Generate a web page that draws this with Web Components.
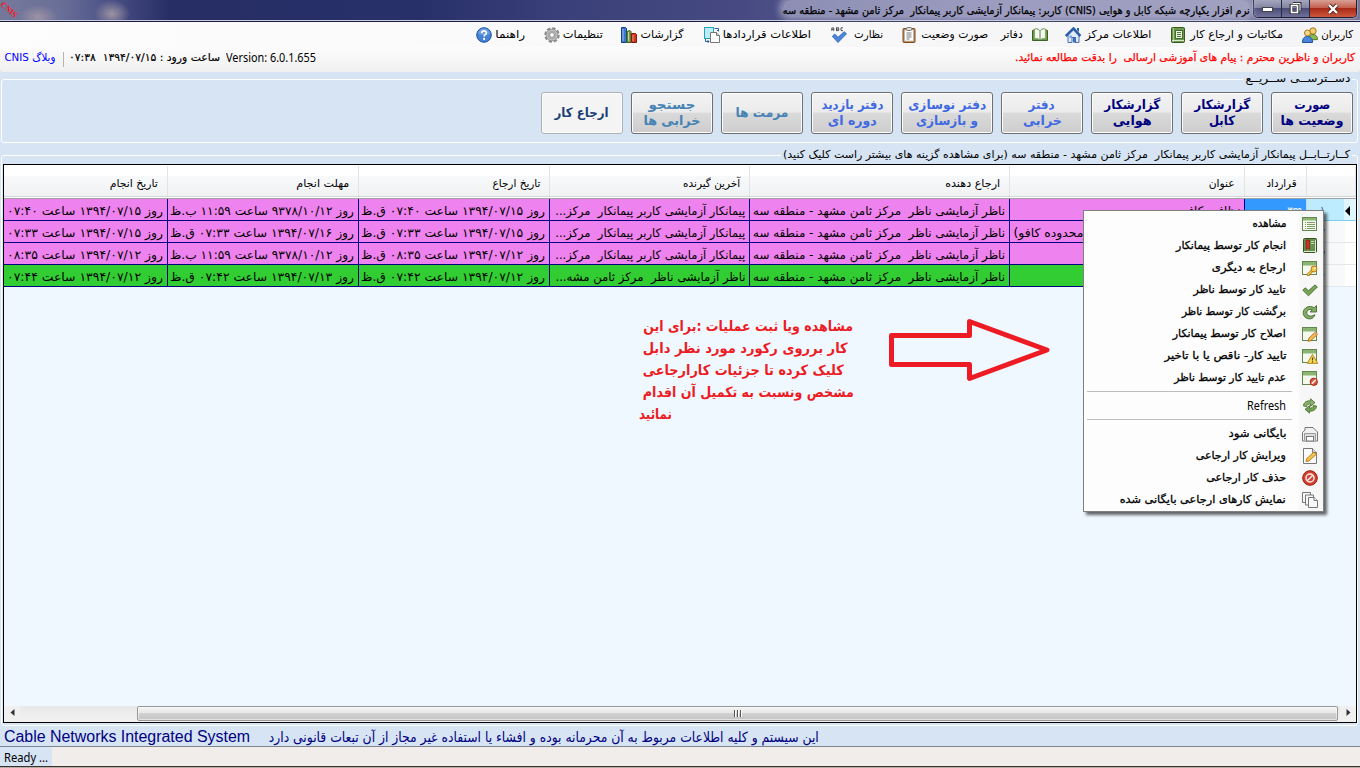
<!DOCTYPE html>
<html lang="fa">
<head>
<meta charset="utf-8">
<title>CNIS</title>
<style>
html,body{margin:0;height:768px;overflow:hidden}
body{font:11px/14px "DejaVu Sans","Noto Sans",sans-serif;color:#000}
</style>
</head>
<body>
<cnis-window></cnis-window>
<script>
function define(name, css, render, ready) {
  customElements.define(name, class extends HTMLElement {
    constructor() {
      super();
      this.attachShadow({mode: 'open'});
    }
    connectedCallback() {
      if (this.shadowRoot.firstChild) return;
      this.shadowRoot.innerHTML = '<style>' + css + '</style>' + render(this);
      if (ready) ready(this);
    }
  });
}
const fa = (text, w, extra = '') => `<fit-text w="${w}" ${extra}>${text}</fit-text>`;

/* ---------- icons, 16x16 ---------- */
const sheet = '<rect x=".5" y="1.5" width="14" height="13" fill="#f4f8ef" stroke="#64874f"/><rect x="1" y="2" width="13" height="3.5" fill="#8db572"/>';
const icons = {
  users: '<circle cx="11" cy="4" r="3.2" fill="#f3cf76" stroke="#a87416"/><path d="M6.5 13c0-4 2-5.500 4.500-5.500s4.500 1.500 4.500 5z" fill="#8eb956" stroke="#557c26"/><circle cx="5.500" cy="6" r="3" fill="#f6d88c" stroke="#a87416"/><path d="M.5 15.500c0-4.500 2-6 5-6s5 1.500 5 6z" fill="#4c86da" stroke="#1d4fa0"/>',
  book: '<rect x="1.500" y=".5" width="13" height="15" rx="1" fill="#6c9a4c" stroke="#38591f"/><path d="M3.500 1v14" stroke="#a5c98a"/><rect x="5.500" y="3.500" width="7" height="8" fill="#e9f3dd" stroke="#486b31"/><path d="M7 5.500h4M7 7.500h4M7 9.500h4" stroke="#50763a"/><path d="M2 13.500h12" stroke="#dce9cf"/>',
  home: '<path d="M3 7v8.500h4v-5h3v5h4V7L8.500 2z" fill="#dfe9f7" stroke="#4a73b0"/><path d="M.8 9 8.500 1.500 15.500 9" fill="none" stroke="#2e5ea9" stroke-width="2.600"/><path d="M12 1h2v4l-2-2z" fill="#2e5ea9"/><rect x="4.500" y="8.500" width="2.500" height="2.500" fill="#79a4df"/><rect x="8" y="10" width="3" height="5.500" fill="#3d6fb8"/>',
  open: '<path d="M.5 3.500 4 2c2 0 3 .5 4 2 1-1.500 2-2 4-2l3.500 1.500v10H.5z" fill="#6c9a4c" stroke="#3d6023"/><path d="M2.500 2c3-.5 4.500.5 5.500 2v9c-1-1-3-1.700-5.500-1.300zM13.500 2C10.500 1.500 9 2.500 8 4v9c1-1 3-1.700 5.500-1.300z" fill="#f4f7ee" stroke="#7b9b65" stroke-width=".8"/>',
  clip: '<rect x="2" y="1.500" width="12" height="14" rx="1" fill="#c58a50" stroke="#7c4a1d"/><rect x="3.500" y="3" width="9" height="11" fill="#fff" stroke="#aaa" stroke-width=".6"/><rect x="5.500" y=".5" width="5" height="3" rx="1" fill="#ddd" stroke="#777"/><path d="M5.500 6h5M5.500 8h5M5.500 10h5M5.500 12h3" stroke="#777"/>',
  check: '<path d="M.8 4.500V1.500h2v3M.8 3.100h2M5.500 1v3.500M5.500 1.400h2.200v2.800H5.500M5.500 2.800h2M12 1.400h-2v2.800h2" fill="none" stroke="#444" stroke-width=".9" transform="translate(0 -.6)"/><path d="m1.300 9.300 2.400-2.200L7 10.300l6.200-5.600 2.300 2.100L7 15.500z" fill="#4c86da" stroke="#285ba8" stroke-width=".8"/>',
  contracts: '<rect x=".5" y=".5" width="9" height="11" fill="#b9ecf5" stroke="#2aa0ba"/><path d="M6.500 5.500h6l3 3v7h-9z" fill="#fff" stroke="#777"/><path d="M12.500 5.500v3h3" fill="#ddd" stroke="#777"/><path d="M10.500 1.500h4V4M13 3l1.500 1.500M1.500 12v2.500H5M3.500 13l1.500 1.500L3.500 16" fill="none" stroke="#2c62ae"/>',
  chart: '<path d="M.5.5h4l1 1v14h-5z" fill="#3b76d1" stroke="#173f85"/><path d="M6 4.500 9 3.500l1 1v11H6z" fill="#75a445" stroke="#3d651b"/><path d="M10.500 6.500h4l1 1v8h-5z" fill="#d5361d" stroke="#84180a"/><path d="M2 2v12M7.500 5v9M12 8v6" stroke="#fff" stroke-opacity=".5"/>',
  gear: '<circle cx="8" cy="8" r="6.600" fill="none" stroke="#888" stroke-width="2.200" stroke-dasharray="3.300 1.884"/><circle cx="8" cy="8" r="5.900" fill="#c4c4c4" stroke="#888" stroke-width=".8"/><circle cx="8" cy="8" r="3.900" fill="none" stroke="#a4a4a4"/><circle cx="8" cy="8" r="2.400" fill="#fff" stroke="#777" stroke-width=".8"/>',
  help: '<circle cx="8" cy="8" r="7.300" fill="#4382d5" stroke="#1f53a3"/><path d="M2 6.500a6 5.200 0 0 1 12 0c-3 2-9 2-12 0z" fill="#fff" opacity=".22"/><path d="M5.700 6.200c0-3 4.700-3 4.700-.3 0 1.700-2.300 1.800-2.300 3.600" fill="none" stroke="#fff" stroke-width="1.700"/><circle cx="8.100" cy="11.900" r="1.100" fill="#fff"/>',
  list: '<rect x=".5" y="1.5" width="14" height="13" fill="#f4f8ef" stroke="#64874f"/><rect x="1" y="2" width="13" height="2.5" fill="#8db572"/><path d="M3 6.500h1M5 6.500h8M3 8.500h1M5 8.500h8M3 10.500h1M5 10.500h8M3 12.500h1M5 12.500h8" stroke="#7ca164"/>',
  redbook: '<rect x="1.500" y=".5" width="13" height="14" rx="1" fill="#67914a" stroke="#34511f"/><path d="M13.500 2v13.500M2 13.500h12" stroke="#dde9d2"/><path d="M4 2h3.500v9.500L5.800 10 4 11.500z" fill="#c8312a" stroke="#7c130f" stroke-width=".6"/><path d="M9 3.500h3M9 5.500h3" stroke="#c8ddb9"/>',
  key: sheet + '<g stroke="#a66c0c" stroke-width=".8" fill="#f4c448"><path d="m10 9.500-5 4.700.3 1.500h2.200v-1.200h1.400v-1.400l2.800-2z"/><circle cx="12" cy="9" r="3"/></g><circle cx="12.800" cy="8.300" r=".9" fill="#fff"/>',
  ok: '<path d="m.8 8.200 2.600-2.400 3 3L13 2.900 15.300 5 6.500 13.800z" fill="#78a657" stroke="#44682c" stroke-width=".9"/>',
  back: '<path d="M14.500 1.500v6.500H8L10.300 5.800C7 4.500 4.800 6.500 4.800 9s3.400 4.500 8.200 1.700C12 14 9 15.300 6.500 14.800 3 14.200 1 11.500 1.200 8.500 1.500 3.500 7.500.8 12.200 3.700z" fill="#82ad65" stroke="#47692f" stroke-width=".9"/>',
  edit: sheet + '<path d="m6 15.300.8-3L13.300 6l2.300 2.200L9 14.600z" fill="#f3ba46" stroke="#a7660c" stroke-width=".8"/><path d="m12 7.200 2.300 2.200 1.300-1.200L13.300 6z" fill="#e49a90"/>',
  warn: sheet + '<path d="M10.500 6.500 15.700 15.300H5.300z" fill="#f8dc62" stroke="#b5820d"/><path d="M10.500 9.500v3M10.500 13.300v1.200" stroke="#5b4100" stroke-width="1.200"/>',
  deny: sheet + '<circle cx="11.800" cy="11.800" r="3.600" fill="#e2553f" stroke="#a32312"/><path d="m9.800 13.800 4-4" stroke="#fff" stroke-width="1.400"/>',
  refresh: '<path d="M1.500 8C1.500 4.500 4.800 2.300 8.500 3V.8L13 4.700 8.500 8.300V6C6.500 5.700 5 6.500 4.700 8.500z" fill="#86b06a" stroke="#456b2c" stroke-width=".8"/><path d="M14.500 8c0 3.500-3.300 5.700-7 5v2.200L3 11.300l4.500-3.600V10c2 .3 3.500-.5 3.800-2.500z" fill="#73a055" stroke="#456b2c" stroke-width=".8"/>',
  disk: '<path d="M3 1.500h8l4.500 4.500v9H.5V6.500L3 4z" fill="#f1f1f1" stroke="#777"/><path d="M2.500 14.500V7.500h11v7" fill="#dcdcdc" stroke="#888" stroke-width=".8"/><rect x="4.500" y="10.500" width="7" height="4.500" fill="#fff" stroke="#777"/>',
  note: '<path d="M1.500.5h9l4 4v11h-13z" fill="#fafafa" stroke="#777"/><path d="M10.500.5v4h4" fill="#ddd" stroke="#777"/><path d="m4 13.500.8-3L12 4l2.400 2.300L7 13z" fill="#f5c14c" stroke="#a7700c" stroke-width=".8"/>',
  stop: '<circle cx="8" cy="8" r="7.300" fill="#d6402f" stroke="#941b0f"/><circle cx="8" cy="8" r="4" fill="none" stroke="#fff" stroke-width="1.500" opacity=".9"/><path d="m5.200 10.800 5.600-5.600" stroke="#fff" stroke-width="1.500" opacity=".9"/>',
  pages: '<g fill="#f8f8f8" stroke="#777"><path d="M.5.5h8v10h-8z"/><path d="M3.500 3h8v10h-8z"/><path d="M6.500 5.500h5.500l3.500 3v7h-9z"/><path d="M12 5.500v3h3.500"/></g>'
};
define('x-icon', ':host{display:block;width:16px;height:16px;flex:none}svg{display:block}',
  el => `<svg width="16" height="16" viewBox="0 0 16 16">${icons[el.getAttribute('name')]}</svg>`);

/* ---------- window frame ---------- */
define('title-bar', `
:host{display:flex;direction:rtl;height:20px;padding-right:3px;border-bottom:1px solid #c9cbe0;box-shadow:0 1px #1c1d3c;position:relative;z-index:1;
background:radial-gradient(ellipse 20px 12px at 38px 17px,#9d92a4,transparent),radial-gradient(ellipse 18px 14px at 112px 14px,#9c93a2,transparent),linear-gradient(90deg,#74799b 0,#6a6f98 60px,#4b5185 110px,#272e65 170px,#28306a 420px,#3a4079 560px,#474a82 740px,#6d6f9f 1000px,#7779a4 1230px,#7a7593 1360px)}
.b{display:flex;direction:ltr;height:17px;border:1px solid #1d1d35;border-top:0;border-radius:0 0 5px 5px;box-shadow:inset 0 0 0 1px #ffffff70,0 0 0 1px #ffffff40;overflow:hidden}
.b i{width:27px;display:flex;align-items:center;justify-content:center;border-right:1px solid #2b2b48;background:linear-gradient(#a5a6bd,#8284a3 45%,#4b4d78 50%,#6f719a)}
.b i:last-child{width:46px;border:0;background:linear-gradient(#d8a096,#c5604f 45%,#a92a17 50%,#cc573c)}
.t{margin-right:3px;padding-top:4px;border-radius:8px;background:#c4c4dc88;box-shadow:0 0 6px 4px #c4c4dc88;height:13px}
.logo{position:absolute;left:-1px;top:6px;width:19px;text-align:center;direction:ltr;font:bold 8px/8px "Liberation Serif",serif;color:#ff1010;transform:rotate(42deg)}
:host{clip-path:inset(0 0 -1px 0)}`,
() => `<div class="b"><i><svg width="12" height="8"><rect x=".5" y="2.500" width="10" height="4" fill="#fff" stroke="#444"/></svg></i><i><svg width="13" height="13"><path d="M4 1.500h7v7M2 3.500h7v7H2z" fill="none" stroke="#333" stroke-width="3"/><path d="M4 1.500h7v7" fill="none" stroke="#fff"/><rect x="2.500" y="3.500" width="6" height="7" fill="none" stroke="#fff" stroke-width="1.600"/></svg></i><i><svg width="14" height="12"><path d="m3 2 8 8M11 2l-8 8" stroke="#51231d" stroke-width="4"/><path d="m3 2 8 8M11 2l-8 8" stroke="#fff" stroke-width="2.400"/></svg></i></div>
<div class="t">${fa('نرم افزار یکپارچه شبکه کابل و هوایی (CNIS) کاربر: پیمانکار آزمایشی کاربر پیمانکار&nbsp; مرکز ثامن مشهد - منطقه سه', 467, 'stroke=".25"')}</div><div class="logo">CNIS</div>`);

define('menu-item', `:host{display:flex;direction:rtl;align-items:center;justify-content:space-between;height:24px;flex:none}:host([flip]){flex-direction:row-reverse}x-icon{margin-top:-1px}`,
  el => { el.style.width = el.getAttribute('w') + 'px'; el.style.marginRight = el.getAttribute('gap') + 'px';
    return fa(el.getAttribute('label'), el.getAttribute('tw')) + `<x-icon name="${el.getAttribute('icon')}"></x-icon>`; });
const menu = [
  ['کاربران','users',51,32,7],['مکاتبات و ارجاع کار','book',113,93,19],['اطلاعات مرکز','home',86,66,19],['دفاتر','open',47,22,17,1],
  ['صورت وضعیت','clip',87,67,13],['نظارت','check',52,29,18],['اطلاعات قراردادها','contracts',107,88,20],['گزارشات','chart',63,43,20],
  ['تنظیمات','gear',59,40,18],['راهنما','help',49,30,19]];
define('menu-bar', `:host{display:flex;direction:rtl;height:24px;padding-top:1px;background:linear-gradient(90deg,#fdfdfd,#f4f4f6)}`,
  () => menu.map(([l,i,w,tw,g,f]) => `<menu-item label="${l}" icon="${i}" w="${w}" tw="${tw}" gap="${g}" ${f?'flip':''}></menu-item>`).join(''));

define('info-strip', `:host{display:flex;align-items:center;height:25px;padding:0 5px 3px 4px;box-sizing:border-box;background:linear-gradient(#fcfcfc,#f0f0f0);border-radius:0 0 3px 3px}
.sep{width:1px;height:15px;background:#b5b5b5;margin:2px 5px 0 8px}.v{margin-left:6px}.red{margin-left:auto;color:#f00}`,
  () => `<div style="color:#00f">${fa('وبلاگ CNIS', 51)}</div><div class="sep"></div>${fa('ساعت ورود : ۱۳۹۴/۰۷/۱۵&nbsp; ۰۷:۳۸', 151, 'stroke=".2"')}<div class="v">${fa('Version: 6.0.1.655', 90, 'ltr size="12" font="Noto Sans"')}</div>
<div class="red">${fa('کاربران و ناظرین محترم : پیام های آموزشی ارسالی&nbsp; را بدقت مطالعه نمائید.', 340, 'stroke=".25"')}</div>`);

/* ---------- group boxes and quick buttons ---------- */
define('group-box', `:host{display:block;direction:rtl}fieldset{box-sizing:border-box;height:100%;margin:0 2px 0 1px;padding:0;border:1px solid #fff;border-radius:3px;min-width:0}legend{height:14px;margin:0 5px 0 0;padding:0 2px;line-height:14px}`,
  el => `<fieldset><legend>${fa(el.getAttribute('label'), el.getAttribute('lw'))}</legend><slot></slot></fieldset>`);

define('quick-button', `:host{display:flex;flex-direction:column;align-items:center;justify-content:center;box-sizing:border-box;width:82px;height:42px;border:1px solid #707070;border-radius:3px;background:linear-gradient(#f3f3f3,#ebebeb 48%,#dadada 50%,#cdcdcd);box-shadow:inset 0 0 0 1px #fcfcfc}
:host([wide]){width:92px}:host([off]){background:#f4f4f4;border-color:#adb2b5}`,
  el => el.getAttribute('lines').split('|').map(s => { const [t,w] = s.split(':'); return fa(t, w, 'size="13" h="16" bold'); }).join(''));
const quick = [
  ['صورت:36|وضعیت ها:63','#000080'],['گزارشکار:56|کابل:26','#000080'],['گزارشکار:56|هوایی:39','#000080'],['دفتر:26|خرابی:39','#4169e1'],
  ['دفتر نوسازی:78|و بازسازی:62','#4169e1','wide'],['دفتر بازدید:62|دوره ای:49','#4169e1'],['مرمت ها:53','#4682b4'],['جستجو:47|خرابی ها:57','#4682b4'],['ارجاع کار:54','#1b3f74','off']];
define('quick-bar', `:host{display:flex;direction:rtl;gap:8px;padding:6px 4px 0 0}`,
  () => quick.map(([l,c,a='']) => `<quick-button lines="${l}" ${a} style="color:${c}"></quick-button>`).join(''));

/* ---------- task grid ---------- */
const cols = '49px 62px 235px 260px 200px 191px 191px 164px';
define('grid-head', `:host{display:grid;direction:rtl;grid-template-columns:${cols};height:34px;box-sizing:border-box;border-bottom:1px solid #a0a0a0;background:linear-gradient(#fff 0 11px,#f8f9fb 11px,#f1f2f4 31px,#d3d5d8 31px 32px,#fff 32px)}
div{padding:11px 9px 0 0;border-right:1px solid #e1e3e6;margin:1px 0 2px}div:first-child{background:#f6f7f9;border:0}`,
  () => '<div></div>' + [['قرارداد',30],['عنوان',26],['ارجاع دهنده',55],['آخرین گیرنده',57],['تاریخ ارجاع',48],['مهلت انجام',53],['تاریخ انجام',48]].map(([t,w]) => `<div>${fa(t,w)}</div>`).join(''));
define('grid-row', `:host{display:grid;direction:rtl;grid-template-columns:${cols};height:22px}
div{box-sizing:border-box;height:22px;padding:5px 4px 0 0;background:var(--row);border-right:1px solid #000080;border-bottom:1px solid #000080;overflow:hidden}
.h{background:linear-gradient(90deg,#f8f9fb 38px,#fff 38px);border:0;border-bottom:1px solid #e3e6ea;display:flex;align-items:center;padding:2px 6px 0 0;gap:20px;color:#3b3b9c}
.h.cur{background:linear-gradient(90deg,#bdecff 37px,#dff6ff 37px);border-color:#7fcdf0}
.sel{background:#39f;color:#fff;border-right-color:#c9d7e6}.l{direction:ltr;padding-left:3px}`,
  el => { const [n,c,t,s,r,a,b,d] = JSON.parse(el.getAttribute('data'));
    return `<div class="h ${n==='۱'?'cur':''}"><svg width="5" height="10">${n==='۱'?'<path d="M5 0v10L0 5z"/>':''}</svg>${fa(n,5)}</div><div class="${c?'sel':''}">${c?fa(c,15,'size="12"'):''}</div><div class="${n==='۲'?'l':''}">${t?fa(t, n==='۲'?76:58,'size="12"'):''}</div><div>${fa(s,252,'size="12"')}</div><div>${fa(r,190,'size="12"')}</div><div>${fa(a,184,'size="12"')}</div><div>${fa(b,184,'size="12"')}</div><div>${fa(d,156,'size="12"')}</div>`; });
define('h-scroll', `:host{display:flex;height:16px;background:linear-gradient(#e8e8e8,#f2f2f2)}
.e{width:16px;display:flex;align-items:center;justify-content:center;background:#f0f0f0}.track{width:117px}.thumb{flex:1;box-sizing:border-box;height:15px;border:1px solid #979797;border-radius:2px;background:linear-gradient(#f4f4f4,#e6e6e6 48%,#d2d2d2 50%,#c3c3c3);display:flex;align-items:center;justify-content:center;gap:1px;box-shadow:inset 0 0 0 1px #fff8}.thumb i{width:2px;height:7px;background:linear-gradient(90deg,#555 50%,#fff 50%)}.r{margin-left:2px}svg{margin-top:-2px}`,
  () => `<div class="e"><svg width="5" height="8"><path d="M4.500 0v7L.5 3.500z" fill="#333"/></svg></div><div class="track"></div><div class="thumb"><i></i><i></i><i></i></div><div class="e r"><svg width="5" height="8"><path d="M.5 0v7l4-3.500z" fill="#333"/></svg></div>`);

const sender = 'ناظر آزمایشی ناظر&nbsp; مرکز ثامن مشهد - منطقه سه', recv = 'پیمانکار آزمایشی کاربر پیمانکار&nbsp; مرکز...';
const rows = [
  ['۱','۳m','نظافت کافو',sender,recv,'روز ۱۳۹۴/۰۷/۱۵ ساعت ۰۷:۴۰ ق.ظ','روز ۹۳۷۸/۱۰/۱۲ ساعت ۱۱:۵۹ ب.ظ','روز ۱۳۹۴/۰۷/۱۵ ساعت ۰۷:۴۰'],
  ['۲','','ومحدوده کافو)',sender,recv,'روز ۱۳۹۴/۰۷/۱۵ ساعت ۰۷:۳۳ ق.ظ','روز ۱۳۹۴/۰۷/۱۶ ساعت ۰۷:۳۳ ق.ظ','روز ۱۳۹۴/۰۷/۱۵ ساعت ۰۷:۳۳'],
  ['۳','','',sender,recv,'روز ۱۳۹۴/۰۷/۱۲ ساعت ۰۸:۳۵ ق.ظ','روز ۹۳۷۸/۱۰/۱۲ ساعت ۱۱:۵۹ ب.ظ','روز ۱۳۹۴/۰۷/۱۲ ساعت ۰۸:۳۵'],
  ['۴','','',sender,'ناظر آزمایشی ناظر&nbsp; مرکز ثامن مشه...','روز ۱۳۹۴/۰۷/۱۲ ساعت ۰۷:۴۲ ق.ظ','روز ۱۳۹۴/۰۷/۱۳ ساعت ۰۷:۴۲ ق.ظ','روز ۱۳۹۴/۰۷/۱۲ ساعت ۰۷:۴۴']];
define('task-grid', `:host{display:flex;flex-direction:column;box-sizing:border-box;width:1354px;height:559px;margin:2px 0 0;border:1px solid #000;background:#f0f8ff;direction:ltr}.fill{flex:1}`,
  () => '<grid-head></grid-head>' + rows.map((r,i) => `<grid-row style="--row:${i===3?'#32cd32':'#ee82ee'}" data='${JSON.stringify(r)}'></grid-row>`).join('') + '<div class="fill"></div><h-scroll></h-scroll>');

/* ---------- context menu ---------- */
const entries = [['مشاهده','list',34],['انجام کار توسط پیمانکار','redbook',110],['ارجاع به دیگری','key',74],['تایید کار توسط ناظر','ok',92],['برگشت کار توسط ناظر','back',104],['اصلاح کار توسط پیمانکار','edit',113],['تایید کار- ناقص یا با تاخیر','warn',122],['عدم تایید کار توسط ناظر','deny',112],0,['Refresh','refresh',39],0,['بایگانی شود','disk',58],['ویرایش کار ارجاعی','note',90],['حذف کار ارجاعی','stop',80],['نمایش کارهای ارجاعی بایگانی شده','pages',166]];
define('menu-entry', `:host{display:flex;direction:rtl;align-items:center;height:22px;padding-right:5px;gap:16px}`,
  el => `<x-icon name="${el.getAttribute('icon')}"></x-icon>` + fa(el.textContent, el.getAttribute('w'), el.textContent === 'Refresh' ? 'ltr size="12" font="Noto Sans"' : 'stroke=".3"'));
define('context-menu', `:host{display:block;box-sizing:border-box;position:absolute;left:1083px;top:210px;width:241px;height:302px;border:1px solid #808080;padding-top:2px;background:linear-gradient(90deg,#fdfdfd 214px,#f7f7f7 216px);box-shadow:3px 3px 3px #0009}hr{height:1px;border:0;background:#bdbdbd;margin:2px 31px 3px 3px}`,
  () => entries.map(e => e ? `<menu-entry icon="${e[1]}" w="${e[2]}">${e[0]}</menu-entry>` : '<hr>').join(''));

/* ---------- instructions drawn over the grid ---------- */
define('red-note', `:host{display:block;position:absolute;left:639px;top:315px;width:420px;color:#ed1c24;direction:rtl}
.l{display:flex;direction:ltr;height:22px;align-items:center}svg{position:absolute;left:246px;top:0}`,
  () => [['مشاهده ویا ثبت عملیات :برای این',210,4],['کار برروی رکورد مورد نظر دابل',205,4],['کلیک کرده تا جزئیات کارارجاعی',201,4],['مشخص ونسبت به تکمیل آن اقدام',211,4],['نمائید',33,0]].map(([t,w,p]) => `<div class="l" style="padding-left:${p}px">${fa(t,w,'size="14" h="20" bold')}</div>`).join('')
  + '<svg width="170" height="70"><path d="M6.500 20.500H84.500V6.500L162 35 84.500 63.500V49.500H6.500z" fill="none" stroke="#ed1c24" stroke-width="5" stroke-linejoin="round"/></svg>');

/* ---------- footer ---------- */
define('secrecy-line', `:host{display:flex;align-items:center;gap:19px;height:20px;padding-left:4px;color:#000080;background:#d6e4f4;border-bottom:1px solid #7f858d;box-sizing:border-box}`,
  () => fa('Cable Networks Integrated System', 246, 'ltr size="16" h="18" font="Liberation Sans"') + fa('این سیستم و کلیه اطلاعات مربوط به آن محرمانه بوده و افشاء یا استفاده غیر مجاز از آن تبعات قانونی دارد', 550, 'size="14" h="20"'));
define('status-bar', `:host{display:flex;flex:1;background:#f1edeb;border-bottom:1px solid #37322f;box-shadow:0 1px #b9aca4;margin-bottom:1px}
div{display:flex;align-items:center;width:48px;padding-left:4px;padding-top:2px;background:#d6e4f4}`,
  () => `<div>${fa('Ready ...', 44, 'ltr size="12" font="Noto Sans"')}</div>`);

define('cnis-window', `:host{display:flex;flex-direction:column;width:1360px;height:768px;overflow:hidden;position:relative;background:#d6e4f4}
.a{height:71px}.b{height:578px;margin-top:5px;margin-bottom:1px}title-bar{margin-bottom:1px}`,
  () => `<title-bar></title-bar><menu-bar></menu-bar><info-strip></info-strip>
<group-box class="a" label="دســترســی ســریــع" lw="105"><quick-bar></quick-bar></group-box>
<group-box class="b" label="کــارتــابــل پیمانکار آزمایشی کاربر پیمانکار&nbsp; مرکز ثامن مشهد - منطقه سه (برای مشاهده گزینه های بیشتر راست کلیک کنید)" lw="567"><task-grid></task-grid></group-box>
<secrecy-line></secrecy-line><status-bar></status-bar><red-note></red-note><context-menu></context-menu>`);

/* A single line of text squeezed or stretched to a known width. */
define('fit-text', `:host{display:block;flex:none;white-space:nowrap}span{display:inline-block;white-space:pre}`,
  () => '<span><slot></slot></span>',
  el => {
    const g = (k, d) => el.getAttribute(k) || d, w = +g('w'), h = g('h', 14), span = el.shadowRoot.querySelector('span');
    const ltr = el.hasAttribute('ltr');
    el.style.cssText += `;width:${w}px;height:${h}px;direction:${ltr ? 'ltr' : 'rtl'};font:${el.hasAttribute('bold') ? 'bold' : 'normal'} ${g('size', 11)}px/${h}px "${g('font', 'DejaVu Sans')}","DejaVu Sans",sans-serif`;
    if (g('stroke')) span.style.webkitTextStroke = g('stroke') + 'px';
    span.style.transformOrigin = ltr ? '0 0' : '100% 0';
    span.style.transform = `scaleX(${w / span.getBoundingClientRect().width})`;
  });
</script>
</body>
</html>
